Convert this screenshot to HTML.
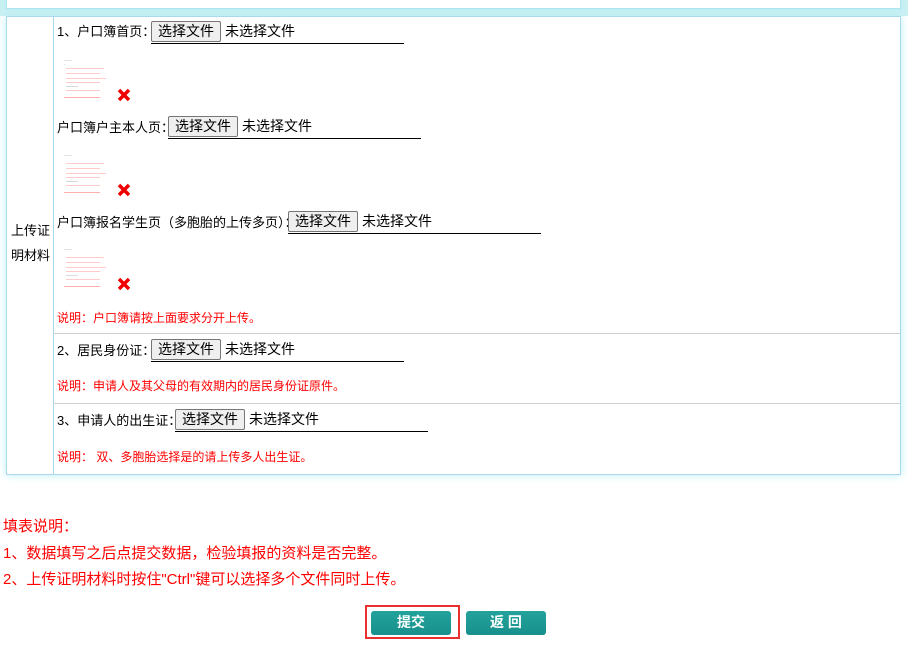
<!DOCTYPE html>
<html><head><meta charset="utf-8"><style>
body{margin:0;width:908px;height:649px;background:#fff;font-family:"Liberation Sans","Noto Sans CJK SC",sans-serif;position:relative;overflow:hidden;color:#000}
.a{position:absolute}
.top{left:6px;top:-2px;width:893px;height:10px;border:1px solid #aee3f0;border-top:none;background:#fff;box-shadow:0 0 6px #b8ecf2}
.band{left:0;top:0;width:908px;height:16px;background:#c8f0f3}
.tbl{left:6px;top:16px;width:893px;height:457px;border:1px solid #aad8ee;background:#fff;box-shadow:0 0 8px #b8eef2}
.vl{left:53px;top:16px;width:1px;height:458px;background:#aad8ee}
.hl{left:53px;width:847px;height:1px;background:#d0d0d0}
.t{font-size:13px;white-space:nowrap;line-height:16px}
.btn{display:inline-block;border:1px solid #767676;background:#efefef;border-radius:2px;padding:0 6px;font-size:14px;line-height:19px;margin-right:4px}
.fi{position:absolute;border-bottom:1px solid #000;height:22px;font-size:14px;white-space:nowrap}
.r{color:#f00;font-size:12px}
.b{background:linear-gradient(#23a29c,#18908b);color:#fff;font-weight:bold;font-size:14px;text-align:center;line-height:22px;border-radius:3px;height:24px}
.n{color:#f00;font-size:15px;white-space:nowrap}
</style></head><body>
<div class="a band"></div>
<div class="a top"></div>
<div class="a tbl"></div>
<div class="a vl"></div>
<div class="a hl" style="top:333px"></div>
<div class="a hl" style="top:403px"></div>
<div class="a t" style="left:11px;top:223px">上传证</div>
<div class="a t" style="left:11px;top:248px">明材料</div>

<div class="a t" style="left:57px;top:24px">1、户口簿首页：</div>
<div class="fi" style="left:151px;top:21px;width:253px"><span class="btn">选择文件</span>未选择文件</div>
<svg class="a" style="left:62px;top:55px" width="75" height="48"><g opacity="0.55"><rect x="2" y="5" width="8" height="0.6" fill="#aaa"/><rect x="2" y="9" width="1" height="0.6" fill="#aaa"/><rect x="4" y="13" width="38" height="0.8" fill="#f88"/><rect x="4" y="18" width="34" height="0.8" fill="#f88"/><rect x="4" y="23" width="40" height="0.8" fill="#f88"/><rect x="4" y="27" width="34" height="0.8" fill="#f88"/><rect x="4" y="31" width="12" height="0.8" fill="#aaa"/><rect x="4" y="35" width="34" height="0.8" fill="#f88"/><rect x="2" y="42" width="36" height="0.8" fill="#f44"/></g><path d="M57 35l10 10M67 35l-10 10" stroke="#e00" stroke-width="3.5"/></svg>

<div class="a t" style="left:57px;top:120px">户口簿户主本人页：</div>
<div class="fi" style="left:168px;top:116px;width:253px"><span class="btn">选择文件</span>未选择文件</div>
<svg class="a" style="left:62px;top:150px" width="75" height="48"><g opacity="0.55"><rect x="2" y="5" width="8" height="0.6" fill="#aaa"/><rect x="4" y="13" width="38" height="0.8" fill="#f88"/><rect x="4" y="18" width="34" height="0.8" fill="#f88"/><rect x="4" y="23" width="40" height="0.8" fill="#f88"/><rect x="4" y="27" width="34" height="0.8" fill="#f88"/><rect x="4" y="31" width="12" height="0.8" fill="#aaa"/><rect x="4" y="35" width="34" height="0.8" fill="#f88"/><rect x="2" y="42" width="36" height="0.8" fill="#f44"/></g><path d="M57 35l10 10M67 35l-10 10" stroke="#e00" stroke-width="3.5"/></svg>

<div class="a t" style="left:57px;top:215px">户口簿报名学生页（多胞胎的上传多页）：</div>
<div class="fi" style="left:288px;top:211px;width:253px"><span class="btn">选择文件</span>未选择文件</div>
<svg class="a" style="left:62px;top:244px" width="75" height="48"><g opacity="0.55"><rect x="2" y="5" width="8" height="0.6" fill="#aaa"/><rect x="4" y="13" width="38" height="0.8" fill="#f88"/><rect x="4" y="18" width="34" height="0.8" fill="#f88"/><rect x="4" y="23" width="40" height="0.8" fill="#f88"/><rect x="4" y="27" width="34" height="0.8" fill="#f88"/><rect x="4" y="31" width="12" height="0.8" fill="#aaa"/><rect x="4" y="35" width="34" height="0.8" fill="#f88"/><rect x="2" y="42" width="36" height="0.8" fill="#f44"/></g><path d="M57 35l10 10M67 35l-10 10" stroke="#e00" stroke-width="3.5"/></svg>
<div class="a r" style="left:57px;top:309px">说明：户口簿请按上面要求分开上传。</div>

<div class="a t" style="left:57px;top:343px">2、居民身份证：</div>
<div class="fi" style="left:151px;top:339px;width:253px"><span class="btn">选择文件</span>未选择文件</div>
<div class="a r" style="left:57px;top:377px">说明：申请人及其父母的有效期内的居民身份证原件。</div>

<div class="a t" style="left:57px;top:413px">3、申请人的出生证：</div>
<div class="fi" style="left:175px;top:409px;width:253px"><span class="btn">选择文件</span>未选择文件</div>
<div class="a r" style="left:57px;top:448px">说明： 双、多胞胎选择是的请上传多人出生证。</div>

<div class="a n" style="left:3px;top:515px">填表说明：</div>
<div class="a n" style="left:3px;top:542px">1、数据填写之后点提交数据，检验填报的资料是否完整。</div>
<div class="a n" style="left:3px;top:568px">2、上传证明材料时按住"Ctrl"键可以选择多个文件同时上传。</div>

<div class="a" style="left:365px;top:605px;width:91px;height:30px;border:2px solid #e8302f"></div>
<div class="a b" style="left:371px;top:611px;width:80px">提交</div>
<div class="a b" style="left:466px;top:611px;width:80px">返 回</div>
</body></html>
